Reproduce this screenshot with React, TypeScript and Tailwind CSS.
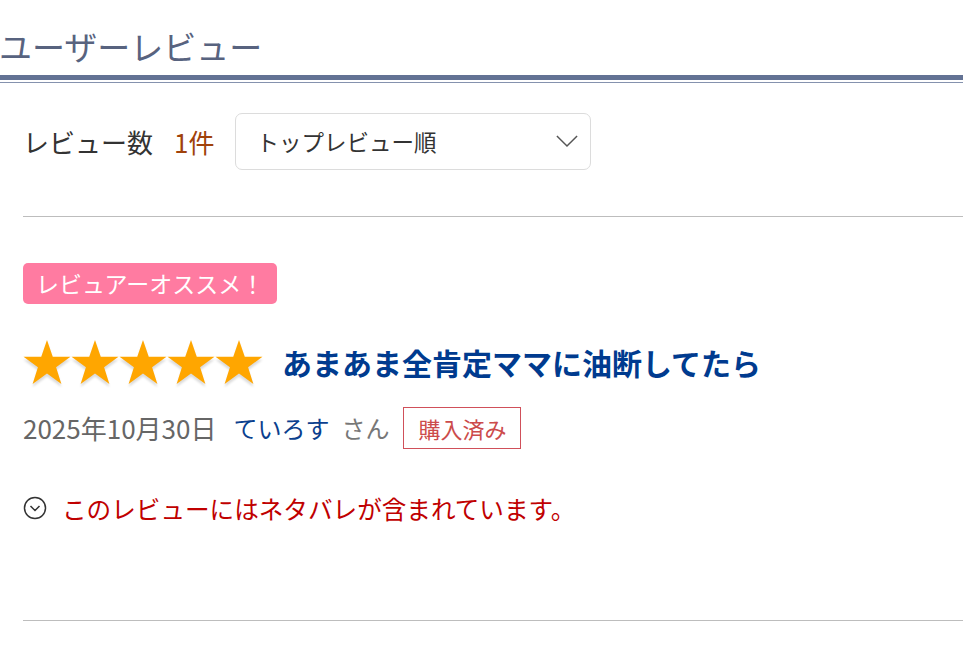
import React from 'react';

const Star: React.FC = () => (
  <svg viewBox="0 0 50 48" className="w-[48px] h-[46px] drop-shadow-[0_3px_1px_rgba(0,0,0,0.14)]">
    <polygon
      points="25,1 31,18.5 49.5,18.5 34.5,29.5 40,47 25,36 10,47 15.5,29.5 0.5,18.5 19,18.5"
      fill="#ffa600"
    />
  </svg>
);

const App: React.FC = () => {
  return (
    <div className="w-[963px] h-[662px] overflow-hidden bg-white font-['Noto_Sans_CJK_JP','Noto_Sans',sans-serif]">
      {/* Header */}
      <h2 className="pt-[22px] ml-[-1px] text-[33px] leading-[48px] text-[#58637f]">
        ユーザーレビュー
      </h2>
      <div className="mt-[5px] h-[5px] bg-[#637294]" />
      <div className="mt-[2px] h-[1px] bg-[#8592ae]" />

      <div className="pl-[23px]">
        {/* Count + sort */}
        <div className="mt-[30px] flex items-center">
          <span className="text-[26px] text-[#333] leading-none">レビュー数</span>
          <span className="ml-[21px] text-[26px] text-[#a0420b] leading-none">1件</span>
          <div className="ml-[21px] w-[356px] h-[57px] border border-[#dcdcdc] rounded-[7px] flex items-center justify-between pl-[20px] pr-[12px]">
            <span className="text-[22.5px] text-[#333]">トップレビュー順</span>
            <svg viewBox="0 0 24 14" className="w-[22px] h-[13px]">
              <path d="M1 1 L12 12 L23 1" fill="none" stroke="#555" strokeWidth="1.6" />
            </svg>
          </div>
        </div>

        <div className="mt-[46px] h-px bg-[#bdbdbd]" />

        {/* Review */}
        <div className="pt-[46px]">
          <span className="inline-flex items-center h-[41px] px-[13px] rounded-[5px] bg-[#ff7ba1] text-white text-[23px]">
            レビュアーオススメ！
          </span>

          <div className="mt-[35px] flex items-center">
            <div className="flex">
              <Star />
              <Star />
              <Star />
              <Star />
              <Star />
            </div>
            <h3 className="ml-[19px] text-[30px] font-bold text-[#003b8f] leading-none">
              あまあま全肯定ママに油断してたら
            </h3>
          </div>

          <div className="mt-[22px] flex items-center leading-none">
            <span className="text-[26px] text-[#666]">2025年10月30日</span>
            <span className="ml-[17px] text-[24px] text-[#0b3f8e]">ていろす</span>
            <span className="ml-[12px] text-[24px] text-[#777]">さん</span>
            <span className="ml-[14px] inline-flex items-center h-[42px] px-[14px] border border-[#d0505a] text-[#cc4b4b] text-[22px]">
              購入済み
            </span>
          </div>

          <div className="mt-[47px] flex items-center">
            <svg viewBox="0 0 24 24" className="w-[24px] h-[24px]">
              <circle cx="12" cy="12" r="10.5" fill="none" stroke="#333" strokeWidth="1.5" />
              <path d="M7.5 10 L12 14.5 L16.5 10" fill="none" stroke="#333" strokeWidth="1.5" />
            </svg>
            <span className="ml-[15px] text-[24.6px] text-[#c00000] leading-none">
              このレビューにはネタバレが含まれています。
            </span>
          </div>
        </div>

        <div className="mt-[99px] h-px bg-[#bdbdbd]" />
      </div>
    </div>
  );
};

export default App;
